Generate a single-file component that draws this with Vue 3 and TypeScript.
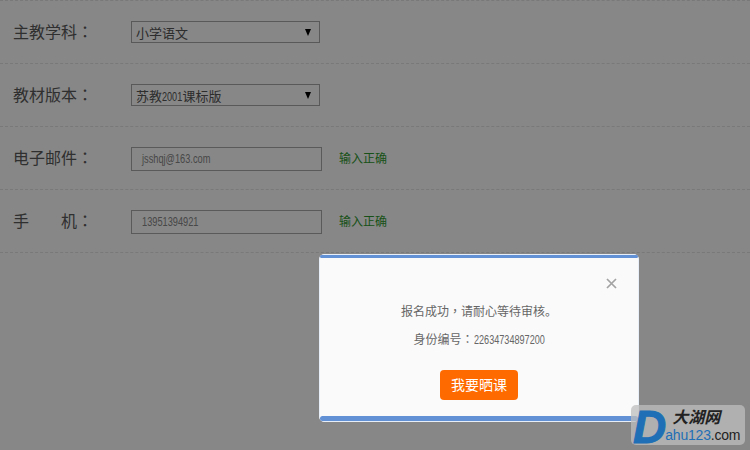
<script setup lang="ts">
interface Row {
  label: string[]
  kind: 'select' | 'input'
  value: string
  ok?: boolean
}
const rows: Row[] = [
  { label: ['主教学科'], kind: 'select', value: '小学语文' },
  { label: ['教材版本'], kind: 'select', value: '苏教2001课标版' },
  { label: ['电子邮件'], kind: 'input', value: 'jsshqj@163.com', ok: true },
  { label: ['手', '机'], kind: 'input', value: '13951394921', ok: true },
]
const parts = (text: string): string[] => text.split(/(\d+)/).filter(Boolean)
const isDigits = (text: string): boolean => /^\d+$/.test(text)
</script>

<template>
  <div class="page">
    <div class="form">
      <div v-for="row in rows" :key="row.label.join('')" class="row">
        <div class="label">
          <div class="label-text">
            <span v-for="piece in row.label" :key="piece">{{ piece }}</span>
          </div>
          <span class="colon">：</span>
        </div>
        <div v-if="row.kind === 'select'" class="select">
          <span>
            <span v-for="part in parts(row.value)" :key="part" :class="{ digits: isDigits(part) }">{{ part }}</span>
          </span>
          <span class="arrow"></span>
        </div>
        <template v-else>
          <div class="input"><span class="input-value">{{ row.value }}</span></div>
          <span class="ok">输入正确</span>
        </template>
      </div>
    </div>

    <div class="mask"></div>

    <div class="dialog">
      <div class="bar top"></div>
      <div class="body">
        <div class="close">
          <svg width="11" height="11" viewBox="0 0 11 11">
            <path d="M1 1 L10 10 M10 1 L1 10" stroke="#a3a3a3" stroke-width="1.7" fill="none" />
          </svg>
        </div>
        <p class="msg first">报名成功<span class="tc">，</span>请耐心等待审核。</p>
        <p class="msg second">身份编号<span class="tc">：</span><span class="num">22634734897200</span></p>
        <div class="btn">我要晒课</div>
      </div>
      <div class="bar bottom"></div>
    </div>

    <div class="mark">
      <span class="mark-d">D</span>
      <div class="mark-text">
        <span class="mark-cn">大湖网</span>
        <span class="mark-en"><b>ahu123</b>.com</span>
      </div>
    </div>
  </div>
</template>

<style>
html, body { margin: 0; padding: 0; }
</style>

<style scoped>
.page {
  position: relative;
  width: 750px;
  height: 450px;
  overflow: hidden;
  background: #fff;
  font-family: "Liberation Sans", "Noto Sans CJK SC", sans-serif;
}
.form { border-top: 1px dashed #e4e4e4; }
.row {
  display: flex;
  align-items: center;
  height: 62px;
  border-bottom: 1px dashed #e4e4e4;
  padding-left: 13px;
}
.label {
  display: flex;
  width: 118px;
  margin-bottom: 2px;
  font-size: 16px;
  color: #5a5a5a;
  font-family: "Noto Sans CJK SC", sans-serif;
}
.label-text { display: flex; justify-content: space-between; width: 64px; }
.colon { width: 16px; font-family: "Noto Sans CJK TC", sans-serif; }
.select {
  box-sizing: border-box;
  width: 189px;
  height: 22px;
  border: 1px solid #a9a9a9;
  background: #fff;
  color: #555;
  font-size: 13px;
  padding: 0 8px 0 4px;
  display: flex;
  align-items: center;
  justify-content: space-between;
  font-family: "Noto Sans CJK SC", sans-serif;
}
.digits {
  display: inline-block;
  font-family: "Liberation Sans", sans-serif;
  transform: scaleX(0.7);
  transform-origin: left center;
  margin-right: -8.5px;
}
.arrow {
  width: 0;
  height: 0;
  border-left: 3.5px solid transparent;
  border-right: 3.5px solid transparent;
  border-top: 7px solid #000;
}
.input {
  box-sizing: border-box;
  width: 191px;
  height: 24px;
  margin-top: 2px;
  border: 1px solid #aaa;
  background: #fff;
  color: #888;
  font-size: 13px;
  line-height: 22px;
  padding-left: 10px;
}
.input-value {
  display: inline-block;
  transform: scaleX(0.71);
  transform-origin: left center;
}
.ok {
  margin-left: 17px;
  margin-bottom: 2px;
  font-size: 12px;
  color: #2f9a2f;
  font-family: "Noto Sans CJK SC", sans-serif;
}
.mask {
  position: absolute;
  inset: 0;
  background: rgba(0, 0, 0, 0.47);
}
.dialog {
  position: absolute;
  left: 319px;
  top: 254px;
  box-sizing: border-box;
  width: 320px;
  height: 168px;
  background: #fafafa;
  border: 1px solid #e8eef8;
  border-radius: 5px;
  display: flex;
  flex-direction: column;
  color: #666;
  font-size: 12px;
}
.bar { background: #6391d6; flex: none; border-radius: 3px; }
.top { height: 3px; }
.bottom { height: 5px; }
.body {
  flex: 1;
  display: flex;
  flex-direction: column;
  align-items: center;
}
.close {
  align-self: flex-end;
  margin: 20px 21px 0 0;
  height: 11px;
  line-height: 0;
}
.msg { margin: 0; line-height: 16px; font-family: "Noto Sans CJK SC", sans-serif; }
.tc { font-family: "Noto Sans CJK TC", sans-serif; }
.first { margin-top: 14px; }
.second { margin-top: 12px; }
.num {
  display: inline-block;
  font-family: "Liberation Sans", sans-serif;
  font-size: 13px;
  transform: scaleX(0.7);
  transform-origin: left center;
  margin-right: -30.4px;
}
.btn {
  margin-top: 22px;
  width: 78px;
  height: 30px;
  line-height: 29px;
  text-align: center;
  background: #ff6a00;
  border-radius: 4px;
  color: #fff;
  font-size: 14px;
  font-family: "Noto Sans CJK SC", sans-serif;
}
.mark {
  position: absolute;
  left: 631px;
  top: 405px;
  width: 114px;
  height: 40px;
  background: rgba(190, 190, 190, 0.75);
  border-radius: 5px;
  display: flex;
  align-items: flex-end;
}
.mark-d {
  align-self: flex-start;
  margin: -4.5px 0 -8px 2px;
  font: italic 700 46px/53px "Liberation Sans", sans-serif;
  color: #1e6fb5;
  -webkit-text-stroke: 1px #1e6fb5;
}
.mark-text { display: flex; flex-direction: column; margin-left: -1px; }
.mark-cn {
  font: italic 700 16px/20px "Noto Sans CJK SC", sans-serif;
  color: #222;
  margin-left: 7px;
  margin-bottom: 1px;
}
.mark-en {
  font: 14px/17px "Liberation Sans", sans-serif;
  color: #222;
  letter-spacing: -0.2px;
  margin-bottom: 1px;
}
.mark-en b { font-weight: 400; color: #1e6fb5; }
</style>
